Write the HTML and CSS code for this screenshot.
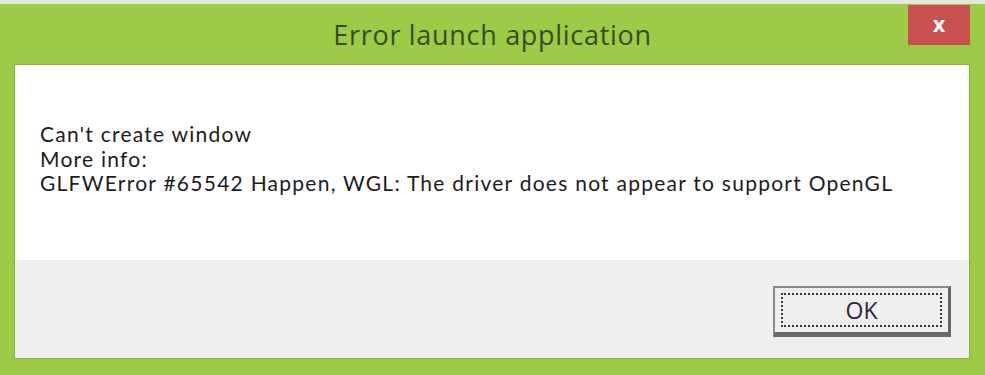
FILE: index.html
```html
<!DOCTYPE html>
<html>
<head>
<meta charset="utf-8">
<link rel="stylesheet" href="styles.css">
</head>
<body>
<div class="window">
  <div class="titlebar">
    <div class="spacer"></div>
    <div class="title">Error launch application</div>
    <div class="controls"><div class="close">x</div></div>
  </div>
  <div class="panel">
    <div class="message">
      <div class="line">Can't create window</div>
      <div class="line">More info:</div>
      <div class="line">GLFWError #65542 Happen, WGL: The driver does not appear to support OpenGL</div>
    </div>
    <div class="footer">
      <button class="ok"><span class="focus">OK</span></button>
    </div>
  </div>
</div>
</body>
</html>
```
FILE: styles.css
```css
html, body { margin: 0; padding: 0; }
body { width: 985px; height: 375px; overflow: hidden; background: #9ccb47; }
.window {
  width: 985px; height: 375px; box-sizing: border-box;
  background: #9ccb47;
  border-top: 4px solid #e3e8dc;
  display: flex; flex-direction: column;
}
.titlebar {
  height: 61px; box-sizing: border-box;
  display: grid; grid-template-columns: 1fr auto 1fr;
  padding: 1px 15px 0 15px;
}
.title {
  font-family: "Open Sans", "Noto Sans", sans-serif;
  font-size: 27px; color: #3c4a20;
  line-height: 60px;
  letter-spacing: 0.7px;
}
.controls { display: flex; justify-content: flex-end; align-items: flex-start; }
.close {
  width: 62px; height: 40px; background: #c8504f;
  color: #fff; font-family: "Open Sans", sans-serif; font-weight: 700;
  font-size: 21px; line-height: 38px; text-align: center;
}
.panel {
  margin: 0 16px 17px 15px; flex: 1;
  display: flex; flex-direction: column;
  box-shadow: 0 0 0 1px #86b33c;
}
.message {
  background: #fff; height: 195px; box-sizing: border-box;
  padding: 57px 0 0 25px;
  font-family: Lato, "Open Sans", sans-serif;
  font-size: 21px; line-height: 24.5px; color: #1c1c1c;
  letter-spacing: 1.25px;
}
.footer {
  flex: 1; background: #efefef;
  display: flex; justify-content: flex-end; align-items: flex-start;
  padding: 26px 18px 0 0;
}
.ok {
  width: 178px; height: 51px; box-sizing: border-box; padding: 5px 6px;
  background: #efefef;
  border: 2px solid #8a8a8a; border-right: 3px solid #666; border-bottom: 5px solid #6a6a6a;
  display: flex;
}
.focus {
  flex: 1; border: 2px dotted #3a3a3a;
  font-family: "Open Sans", sans-serif; font-size: 23px; color: #2a2a3a;
  display: flex; align-items: center; justify-content: center;
}
```
